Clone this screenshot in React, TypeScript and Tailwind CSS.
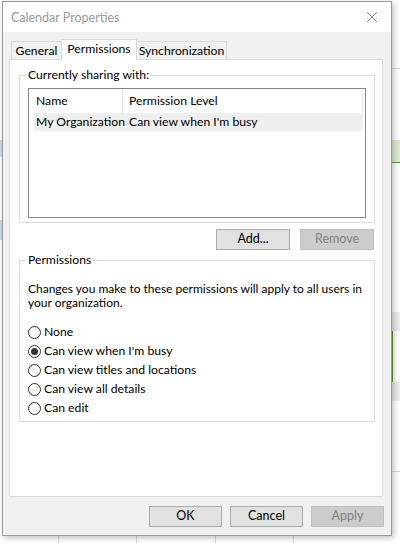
import React, { useState } from "react";

const options = [
  "None",
  "Can view when I'm busy",
  "Can view titles and locations",
  "Can view all details",
  "Can edit",
];

function Radio({ label, checked, onClick }: { label: string; checked: boolean; onClick: () => void }) {
  return (
    <div className="flex items-center h-[19px] cursor-default" onClick={onClick}>
      <span className="w-[13px] h-[13px] rounded-full border border-[#333] bg-white flex items-center justify-center">
        {checked && <span className="w-[7px] h-[7px] rounded-full bg-[#333]" />}
      </span>
      <span className="ml-[3px]">{label}</span>
    </div>
  );
}

function Button({ children, disabled, className = "" }: { children: React.ReactNode; disabled?: boolean; className?: string }) {
  return (
    <button
      disabled={disabled}
      className={
        "h-[21px] border text-[12.5px] leading-none " +
        (disabled
          ? "bg-[#cccccc] border-[#bfbfbf] text-[#838383]"
          : "bg-[#e1e1e1] border-[#adadad] text-black") +
        " " +
        className
      }
    >
      {children}
    </button>
  );
}

export default function App() {
  const [selected, setSelected] = useState(1);

  return (
    <div className="w-[400px] h-[543px] bg-white relative overflow-hidden font-['Lato','Noto_Sans',sans-serif] text-[12.2px] text-black">
      {/* calendar behind the dialog */}
      <div className="absolute left-0 top-[140px] w-[3px] h-[17px] bg-[#c5dcf0]" />
      <div className="absolute left-0 top-[220px] w-[3px] h-[20px] bg-[#c5dcf0]" />
      <div className="absolute left-[392px] top-[68px] w-[8px] h-px bg-[#d4d4d4]" />
      <div className="absolute left-[392px] top-[140px] w-[8px] h-[22px] bg-[#dcebd1]" />
      <div className="absolute left-[392px] top-[162px] w-[8px] h-px bg-[#5b9a2a]" />
      <div className="absolute left-[392px] top-[312px] w-[8px] h-[19px] bg-[#ececec]" />
      <div className="absolute left-[392px] top-[331px] w-px h-[70px] bg-[#5b9a2a]" />
      <div className="absolute left-[392px] top-[382px] w-[8px] h-[19px] bg-[#ececec]" />
      <div className="absolute left-[392px] top-[471px] w-[8px] h-px bg-[#d4d4d4]" />
      <div className="absolute left-[58px] top-[536px] w-px h-[7px] bg-[#d4d4d4]" />
      <div className="absolute left-[136px] top-[536px] w-px h-[7px] bg-[#d4d4d4]" />
      <div className="absolute left-[215px] top-[536px] w-px h-[7px] bg-[#d4d4d4]" />
      <div className="absolute left-[293px] top-[536px] w-px h-[7px] bg-[#d4d4d4]" />

      {/* dialog window */}
      <div className="absolute left-[2px] top-[1px] w-[390px] h-[535px] border border-[#9a9a9a] bg-[#f0f0f0] shadow-[2px_2px_6px_rgba(0,0,0,0.25)] flex flex-col">
        <div className="h-[30px] bg-white flex items-center justify-between pl-[8px] pr-[10px] pt-[2px]">
          <span className="text-[#9a9a9a] text-[12.5px]">Calendar Properties</span>
          <svg width="12" height="12" viewBox="0 0 12 12" className="mr-[3px] -mt-[2px]">
            <path d="M1 1 L11 11 M11 1 L1 11" stroke="#8f8f8f" strokeWidth="1" fill="none" />
          </svg>
        </div>

        <div className="flex-1 flex flex-col pl-[6px] pr-[8px] pt-[8px]">
          {/* tabs */}
          <div className="flex items-end pl-[2px] h-[19px] relative z-10">
            <div className="w-[51px] h-[18px] border border-b-0 border-[#d9d9d9] flex items-center justify-center pt-[1px]">
              General
            </div>
            <div className="w-[76px] h-[21px] -mx-px -mb-px border border-b-0 border-[#d9d9d9] bg-white flex items-center justify-center pb-[2px] relative z-10">
              Permissions
            </div>
            <div className="w-[91px] h-[18px] border border-b-0 border-[#d9d9d9] flex items-center justify-center pt-[1px]">
              Synchronization
            </div>
          </div>

          <div className="h-[438px] border border-[#d9d9d9] bg-white pl-[9px] pr-[7px] pt-[8px]">
            {/* currently sharing */}
            <fieldset className="border border-[#dcdcdc] h-[155px] px-[8px] pb-[4px]">
              <legend className="-ml-px px-px leading-[14px]">Currently sharing with:</legend>
              <div className="mt-[6px] h-[130px] border border-[#828790] flex flex-col">
                <div className="h-[24px] flex items-center whitespace-nowrap">
                  <div className="w-[94px] h-full border-r border-[#e5e5e5] flex items-center pl-[7px]">Name</div>
                  <div className="flex-1 h-full flex items-center pl-[6px] border-r border-[#e5e5e5] mr-[2px]">
                    Permission Level
                  </div>
                </div>
                <div className="ml-[5px] mr-[2px] h-[18px] bg-[#efefef] flex items-center whitespace-nowrap">
                  <span className="w-[89px] pl-[2px]">My Organization</span>
                  <span className="pl-[6px]">Can view when I'm busy</span>
                </div>
              </div>
            </fieldset>

            <div className="flex justify-end gap-[10px] mt-[6px] pr-[1px]">
              <Button className="w-[74px]">Add...</Button>
              <Button disabled className="w-[74px]">Remove</Button>
            </div>

            {/* permissions */}
            <fieldset className="mt-[3px] border border-[#dcdcdc] h-[169px] px-[8px]">
              <legend className="-ml-px px-px leading-[14px]">Permissions</legend>
              <p className="mt-[15px] leading-[14px] text-[12px] pr-[2px]">
                Changes you make to these permissions will apply to all users in your organization.
              </p>
              <div className="mt-[13px] flex flex-col">
                {options.map((o, i) => (
                  <Radio key={o} label={o} checked={selected === i} onClick={() => setSelected(i)} />
                ))}
              </div>
            </fieldset>
          </div>

          <div className="flex justify-end gap-[8px] mt-[9px] -mr-px">
            <Button className="w-[73px]">OK</Button>
            <Button className="w-[73px]">Cancel</Button>
            <Button disabled className="w-[73px]">Apply</Button>
          </div>
        </div>
      </div>
    </div>
  );
}
